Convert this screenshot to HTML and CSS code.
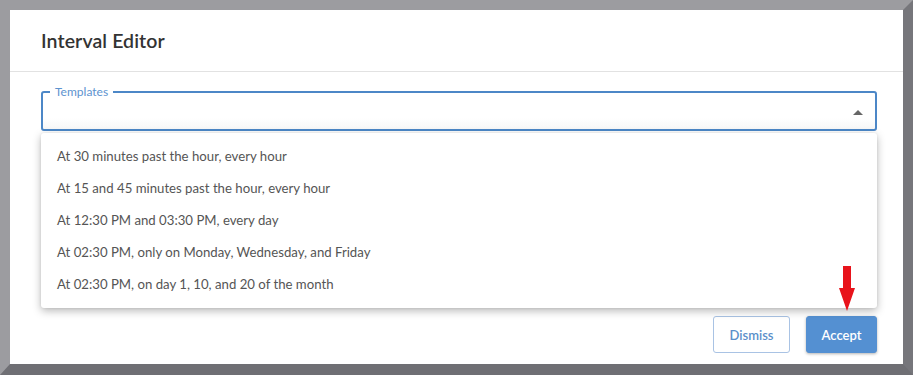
FILE: index.html
```html
<!DOCTYPE html>
<html>
<head>
<meta charset="utf-8">
<link rel="stylesheet" href="styles.css">
</head>
<body>
<div class="frame">
  <div class="modal">
    <div class="modal-header"><h1 class="title">Interval Editor</h1></div>
    <div class="modal-body">
      <div class="select-wrap">
        <fieldset class="select">
          <legend class="select-label">Templates</legend>
          <span class="caret"></span>
        </fieldset>
        <ul class="menu">
          <li class="menu-item">At 30 minutes past the hour, every hour</li>
          <li class="menu-item">At 15 and 45 minutes past the hour, every hour</li>
          <li class="menu-item">At 12:30 PM and 03:30 PM, every day</li>
          <li class="menu-item">At 02:30 PM, only on Monday, Wednesday, and Friday</li>
          <li class="menu-item">At 02:30 PM, on day 1, 10, and 20 of the month</li>
        </ul>
      </div>
    </div>
    <div class="modal-footer">
      <button class="btn btn-outline">Dismiss</button>
      <div class="accept-wrap">
        <svg class="arrow" width="18" height="46" viewBox="0 0 18 46"><path d="M5 0H13V22H17L9 45L1 22H5Z" fill="#e8131b"/></svg>
        <button class="btn btn-primary">Accept</button>
      </div>
    </div>
  </div>
</div>
</body>
</html>
```
FILE: styles.css
```css
* { box-sizing: border-box; }
html, body { margin: 0; padding: 0; background: #fff; }
body { font-family: "Lato", "Open Sans", sans-serif; }

.frame {
  width: 913px;
  height: 375px;
  border-style: solid;
  border-width: 10px 10px 11px 10px;
  border-color: #9c9ca0 #76767b #6f6f74 #9c9ca0;
  background: #fff;
}

.modal {
  height: 100%;
  display: flex;
  flex-direction: column;
}

.modal-header {
  height: 62px;
  padding-left: 31px;
  border-bottom: 1px solid #e2e2e2;
  display: flex;
  align-items: center;
}

.title {
  margin: 0;
  font-size: 19.5px;
  font-weight: 600;
  color: #333;
  letter-spacing: 0.1px;
}

.modal-body {
  padding: 14px 26px 0 31px;
  flex: 1;
}

.select-wrap { position: relative; }

.select {
  position: relative;
  margin: 0;
  height: 45px;
  padding: 0 7px;
  border: 2px solid #4c87c7;
  border-radius: 3px;
  background: linear-gradient(#fff 70%, #f7f7f7);
}

.select-label {
  padding: 0 5px;
  margin-left: 0;
  font-size: 12px;
  color: #5d93cf;
  line-height: 12px;
}

.caret {
  position: absolute;
  right: 12px;
  top: 12px;
  width: 0;
  height: 0;
  border-left: 5px solid transparent;
  border-right: 5px solid transparent;
  border-bottom: 5px solid #666;
}

.menu {
  position: absolute;
  left: 0;
  right: 0;
  top: 47px;
  margin: 0;
  padding: 7px 0 8px;
  list-style: none;
  background: #fff;
  border-radius: 3px;
  box-shadow: 0 3px 8px rgba(0,0,0,0.28), 0 0 3px rgba(0,0,0,0.08);
  z-index: 2;
}

.menu-item {
  height: 32px;
  line-height: 32px;
  padding-left: 16px;
  font-size: 13.2px;
  color: #555;
}

.modal-footer {
  display: flex;
  justify-content: flex-end;
  align-items: flex-end;
  gap: 16px;
  padding: 0 26px 11px 0;
}

.accept-wrap { position: relative; }

.arrow {
  position: absolute;
  left: 32px;
  top: -50px;
  z-index: 3;
}

.btn {
  height: 37px;
  border-radius: 3px;
  font-family: "Lato", "Open Sans", sans-serif;
  font-size: 13px;
  font-weight: 600;
  cursor: pointer;
}

.btn-outline {
  width: 77px;
  background: #fff;
  border: 1px solid #a9c3e4;
  color: #5b8fca;
}

.btn-primary {
  width: 71px;
  background: #5490d2;
  border: 1px solid #5490d2;
  color: #fff;
  box-shadow: 0 1px 3px rgba(0,0,0,0.3);
}
```
